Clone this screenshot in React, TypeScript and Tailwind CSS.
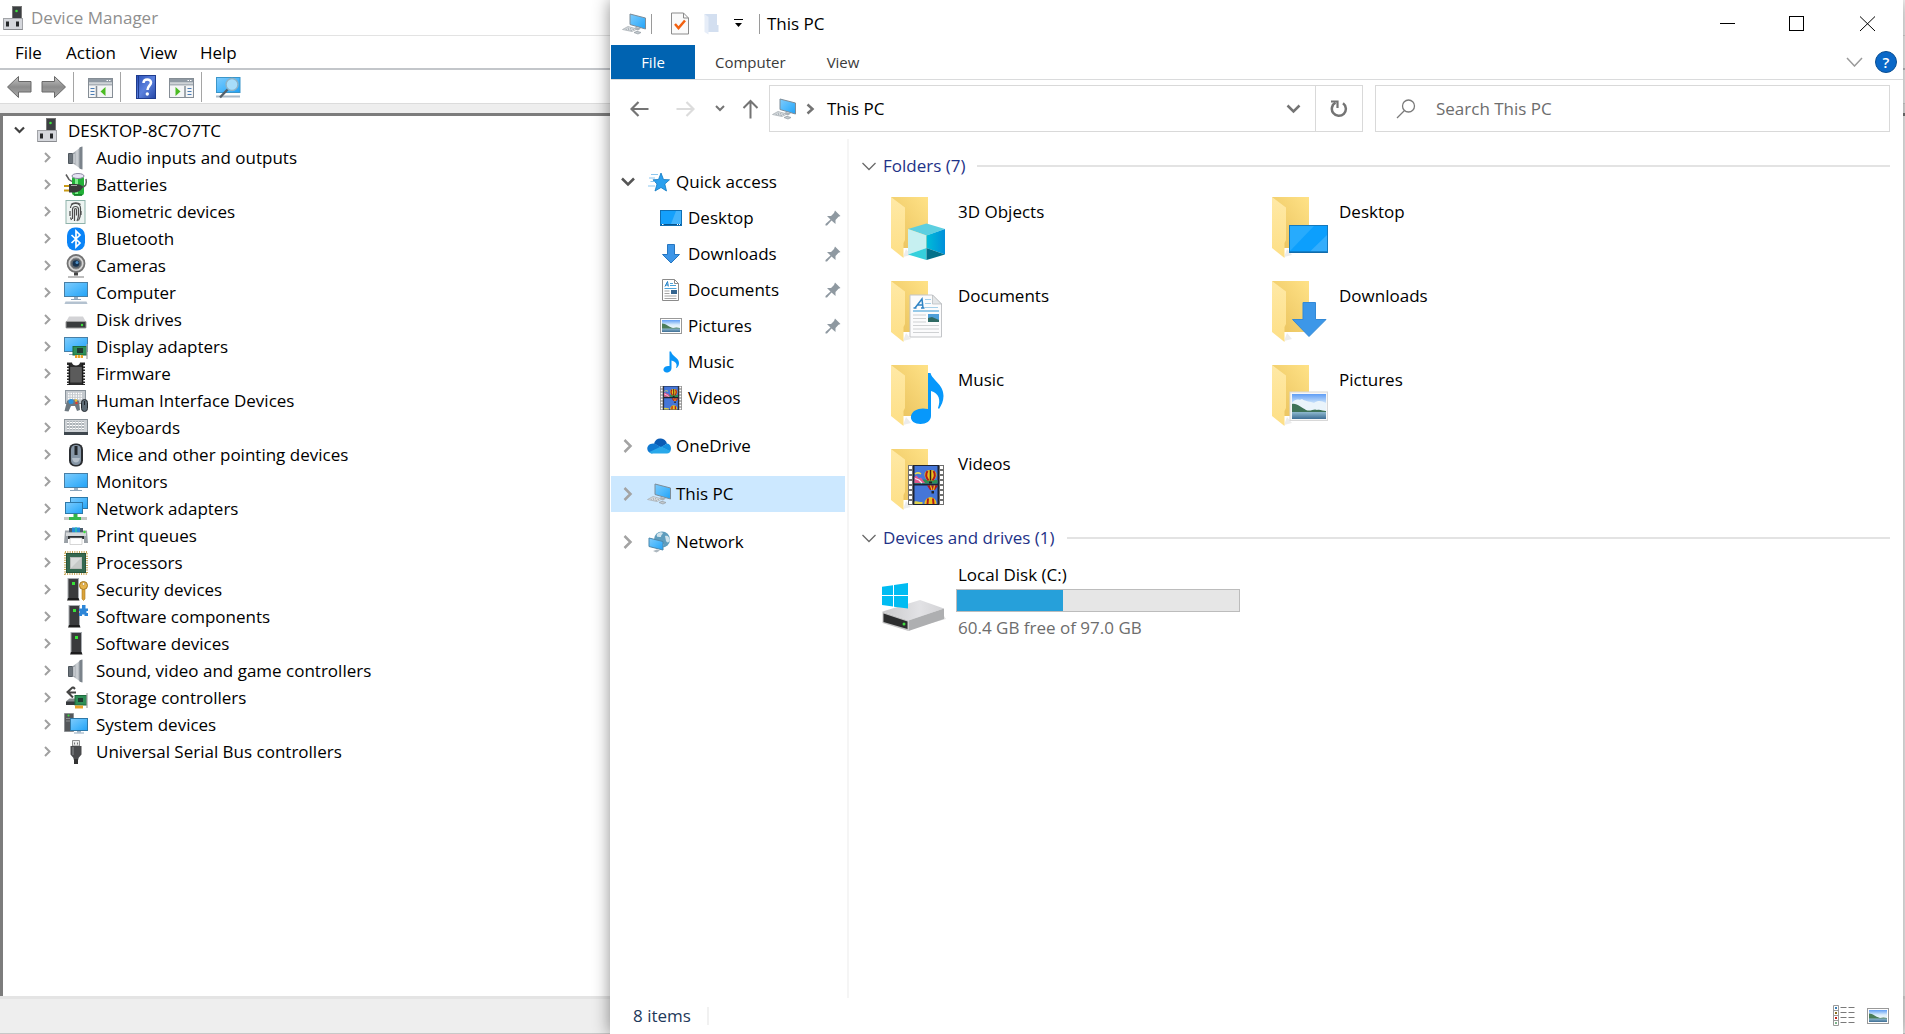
import type { ReactNode } from "react";

interface IconProps {
  children: ReactNode;
  w?: number;
  h?: number;
  box?: string;
}

const Svg = ({ children, w = 24, h = 24, box }: IconProps) => (
  <svg
    width={w}
    height={h}
    viewBox={box ?? `0 0 ${w} ${h}`}
    fill="none"
    aria-hidden="true"
    className="shrink-0"
  >
    {children}
  </svg>
);

const Gradients = () => (
  <svg className="absolute h-0 w-0" aria-hidden="true">
    <defs>
      <linearGradient id="screen" x1="0" y1="0" x2="1" y2="1">
        <stop offset="0" stopColor="#7fcbfb" />
        <stop offset="0.5" stopColor="#4fb9fc" />
        <stop offset="1" stopColor="#22a2f6" />
      </linearGradient>
      <linearGradient id="metal" x1="0" y1="0" x2="1" y2="0">
        <stop offset="0" stopColor="#7d848b" />
        <stop offset="0.5" stopColor="#d2d6da" />
        <stop offset="1" stopColor="#868d94" />
      </linearGradient>
      <linearGradient id="grayArrow" x1="0" y1="0" x2="0" y2="1">
        <stop offset="0" stopColor="#c4c4c4" />
        <stop offset="0.5" stopColor="#8c8c8c" />
        <stop offset="1" stopColor="#a9a9a9" />
      </linearGradient>
      <linearGradient id="folderBack" x1="1" y1="0" x2="0" y2="1">
        <stop offset="0" stopColor="#ffe287" />
        <stop offset="1" stopColor="#e8c05a" />
      </linearGradient>
      <linearGradient id="folderFlap" x1="0" y1="0" x2="0" y2="1">
        <stop offset="0" stopColor="#ffe9a6" />
        <stop offset="1" stopColor="#fddf86" />
      </linearGradient>
      <linearGradient id="sky" x1="0" y1="0" x2="0" y2="1">
        <stop offset="0" stopColor="#5f9df5" />
        <stop offset="0.6" stopColor="#d9ecfb" />
        <stop offset="1" stopColor="#eef7fc" />
      </linearGradient>
      <linearGradient id="lake" x1="0" y1="0" x2="0" y2="1">
        <stop offset="0" stopColor="#8fb9cf" />
        <stop offset="1" stopColor="#3d6d94" />
      </linearGradient>
      <linearGradient id="cubeRight" x1="0" y1="0" x2="1" y2="0">
        <stop offset="0" stopColor="#00bcd8" />
        <stop offset="1" stopColor="#008fda" />
      </linearGradient>
      <linearGradient id="helpBlue" x1="0" y1="0" x2="1" y2="1">
        <stop offset="0" stopColor="#2a50b8" />
        <stop offset="0.5" stopColor="#5c82de" />
        <stop offset="1" stopColor="#2546a4" />
      </linearGradient>
      <linearGradient id="driveTop" x1="0" y1="0" x2="1" y2="0">
        <stop offset="0" stopColor="#c9c9cb" />
        <stop offset="0.6" stopColor="#e2e2e5" />
        <stop offset="1" stopColor="#d2d2d5" />
      </linearGradient>
    </defs>
  </svg>
);

/* ---------- Device Manager icons ---------- */

const HostIcon = () => (
  <Svg w={20} h={24}>
    <rect x="9.500" y="0.500" width="9" height="13" fill="#3c3f42" stroke="#777" />
    <circle cx="13.500" cy="5" r="1.300" fill="#3fe03f" />
    <rect x="0.500" y="12.500" width="19" height="11" fill="#d5d7dc" stroke="#a2a4a8" />
    <path d="M1 23.500h18.500" stroke="#8a8c90" />
    <rect x="3" y="15.500" width="3" height="5" fill="#26282a" />
    <rect x="13" y="15.500" width="3" height="5" fill="#26282a" />
  </Svg>
);

const SpeakerIcon = () => (
  <Svg>
    <path d="M4.500 7.500h4v10h-4z" fill="#6c747b" stroke="#4f575e" />
    <path d="M8.500 7.500L17.500 0.500v23L8.500 17z" fill="url(#metal)" />
    <path d="M15.500 1.500v21l3 1V0.500z" fill="#7b838b" />
    <path d="M10 8v9" stroke="#e3e6e9" />
  </Svg>
);

const BatteryIcon = () => (
  <Svg>
    <rect x="8" y="3" width="12" height="19.500" rx="3" fill="#22b038" />
    <path d="M11 5h3v16h-3z" fill="#7df08a" />
    <ellipse cx="14" cy="3" rx="6" ry="2.500" fill="#e5e2f2" stroke="#8a86a0" />
    <path d="M2 1.500l3 5 3 2M17 14c5 0 6-3 5-8" stroke="#5b5b5b" strokeWidth="1.500" />
    <path d="M0 13h6M0 17.500h6" stroke="#c99a16" strokeWidth="2" />
    <path d="M5 11h6c4 0 7 1 8 3-2 4-5 5-8 5.500H5z" fill="#3b3b3b" />
    <path d="M7 12.500h6" stroke="#a5a5a5" />
    <path d="M10 22h8" stroke="#117522" strokeWidth="1.500" />
  </Svg>
);

const FingerprintIcon = () => (
  <Svg>
    <rect x="2" y="0.500" width="19" height="23" fill="#eef4f2" stroke="#8fb3ab" />
    <g stroke="#4d4d4d" strokeWidth="1.200">
      <path d="M6.500 8c0-6 10-6 10 0v5c0 3-1 6-2 7.500" />
      <path d="M6 11v5M8.500 19V9.500c0-4 6-4 6 0V15c0 2-.5 3.500-1.500 6" />
      <path d="M10.500 21V10c0-2 2-2 2 0v5.500" />
      <path d="M7 4.500c2.500-2.300 7-2.300 9.500 0" />
      <path d="M17 11v4M6.500 17.500l1 2.500" />
    </g>
  </Svg>
);

const BluetoothIcon = () => (
  <Svg>
    <rect x="3" y="0.500" width="18" height="23" rx="8" fill="#0a84f7" />
    <path d="M7.500 8l8.500 8-4 4V4l4 4-8.500 8" stroke="#fff" strokeWidth="1.700" />
  </Svg>
);

const CameraIcon = () => (
  <Svg>
    <circle cx="12" cy="9.500" r="8.500" fill="#d5d5d5" stroke="#747474" strokeWidth="1.800" />
    <circle cx="12" cy="9.500" r="5.500" fill="#5f666d" stroke="#8d8d8d" />
    <circle cx="12" cy="9.500" r="3.300" fill="#16324f" />
    <circle cx="13" cy="8.500" r="1.500" fill="#4d8dc4" />
    <path d="M12 18.500v3" stroke="#444" strokeWidth="4" />
    <path d="M4 23h16" stroke="#a9a9a9" strokeWidth="1.500" />
  </Svg>
);

const MonitorIcon = () => (
  <Svg>
    <rect x="0.500" y="3.500" width="23" height="14" fill="url(#screen)" stroke="#477fa6" />
    <path d="M10 18h4v2h-4z" fill="#9db2c4" />
    <path d="M6 20.500h12" stroke="#8ea6bb" />
  </Svg>
);

const ComputerIcon = () => (
  <Svg>
    <rect x="0.500" y="1.500" width="23" height="14" fill="url(#screen)" stroke="#477fa6" />
    <path d="M10 16h4v2h-4z" fill="#9db2c4" />
    <path d="M7 18.500h10" stroke="#8ea6bb" />
    <path d="M1.500 20.500h21l1 2.500H0.500z" fill="#b4c2d0" />
  </Svg>
);

const DiskIcon = () => (
  <Svg>
    <path d="M5 8.500h14l3 5.500H2z" fill="#d3d3d6" />
    <rect x="2" y="13.500" width="20" height="6.500" rx="0.500" fill="#3a3c3e" stroke="#9b9b9b" />
    <circle cx="18" cy="17" r="1.200" fill="#3de33d" />
  </Svg>
);

const DisplayAdapterIcon = () => (
  <Svg>
    <rect x="0.500" y="2.500" width="23" height="14" fill="url(#screen)" stroke="#477fa6" />
    <path d="M5 19.500h6" stroke="#8ea6bb" />
    <rect x="9" y="11.500" width="13.500" height="8.500" fill="#2f8f57" stroke="#1d6b3c" />
    <rect x="13" y="13" width="6" height="5" fill="#1f3d33" />
    <path d="M11 20v3h8v-3z" fill="#e8a32a" />
    <path d="M13.500 20v3M16.500 20v3" stroke="#fff" strokeWidth="0.600" />
    <path d="M23 9v15" stroke="#a9a9a9" strokeWidth="1.300" />
  </Svg>
);

const FirmwareIcon = () => (
  <Svg>
    <path d="M3 0.500h5c0 4 8 4 8 0h5V23H3z" fill="#2b2b2b" />
    <path d="M6 5h12v15.500H6z" fill="#5b5b5b" />
    <path d="M3.500 3v19M20.500 3v19" stroke="#fff" strokeWidth="2.500" strokeDasharray="1.500 1.500" />
    <path d="M5.500 1v22M18.500 1v22" stroke="#1b1b1b" strokeWidth="1.300" />
  </Svg>
);

const HidIcon = () => (
  <Svg>
    <rect x="1.500" y="1.500" width="20" height="13" fill="#c4c9ce" stroke="#8b949c" />
    <path d="M4 4.500h15M4 7h15M4 9.500h15" stroke="#fff" strokeWidth="1.500" strokeDasharray="1.500 1" />
    <path d="M3 12c2-2 10-2 12 0l1 9-3 1-2-5H7l-2.500 5.500-4-.5z" fill="#6d7880" />
    <circle cx="7" cy="12.500" r="2.500" fill="#2b93dd" />
    <circle cx="12.500" cy="14" r="1.300" fill="#dd3f2f" />
    <circle cx="12" cy="11.500" r="1.300" fill="#edc22e" />
    <rect x="17.500" y="10.500" width="6" height="12" rx="3" fill="#5d6a75" stroke="#262b30" />
    <path d="M20.500 12v4" stroke="#20252a" />
  </Svg>
);

const KeyboardIcon = () => (
  <Svg>
    <rect x="0.500" y="3.500" width="23" height="14" fill="#cdd1d5" stroke="#8d959b" />
    <path d="M0 16h24v3H0z" fill="#3f474e" />
    <path d="M3 6.500h18M3 9.500h18M3 12.500h18" stroke="#8c9399" strokeWidth="2" strokeDasharray="2 1" />
    <path d="M3 6.500h18M3 9.500h18M3 12.500h18" stroke="#fff" strokeDasharray="2 1" />
  </Svg>
);

const MouseIcon = () => (
  <Svg>
    <rect x="5" y="0.500" width="14" height="23" rx="6" fill="#2a2d31" />
    <rect x="7" y="2" width="10" height="20" rx="4.500" fill="#8696a6" />
    <path d="M8 15c1 6 7 6 8 0" fill="#b4bfca" />
    <path d="M12 3v9" stroke="#23272b" strokeWidth="3" />
  </Svg>
);

const NetworkAdapterIcon = () => (
  <Svg>
    <rect x="6.500" y="0.500" width="17" height="11" fill="url(#screen)" stroke="#2d78a8" />
    <rect x="1.500" y="5.500" width="17" height="11" fill="url(#screen)" stroke="#2d78a8" />
    <path d="M9.500 17h4v3h-4z" fill="#36b24a" />
    <path d="M0 21.500h6M17 21.500h6" stroke="#c5c9c5" strokeWidth="3" />
    <path d="M5 21.500h12" stroke="#35b94b" strokeWidth="3" />
  </Svg>
);

const PrinterIcon = () => (
  <Svg>
    <path d="M5 4h14v6H5z" fill="#4d5d6b" />
    <path d="M8 3.500h8v6H8z" fill="#2489d6" />
    <path d="M11 3.500h2v6h-2z" fill="#27b8b3" />
    <path d="M1 6.500h4v2h14v-2h4l1 12.500h-4v-4H4v4H0z" fill="#9aa0a6" />
    <path d="M2 8.500h20v3.500H2z" fill="#d5d8da" />
    <path d="M4 12h16v3H4z" fill="#2c2f33" />
    <path d="M6 14h12v6.500H6z" fill="#fff" stroke="#bbb" strokeWidth="0.600" />
    <circle cx="20.500" cy="8" r="1.200" fill="#3be13b" />
  </Svg>
);

const ProcessorIcon = () => (
  <Svg>
    <rect x="1" y="1" width="22" height="22" stroke="#c4a254" strokeWidth="2" strokeDasharray="1 1.330" />
    <rect x="2.500" y="2.500" width="19" height="19" fill="#35684f" stroke="#25543c" />
    <rect x="6.500" y="6.500" width="11" height="11" fill="#d9dbda" stroke="#b7bbb8" />
    <path d="M7 17L17 7v10z" fill="#c6c9c7" />
  </Svg>
);

const Tower = ({ x }: { x: number }) => (
  <g>
    <rect x={x} y="0.500" width="10.500" height="20" fill="#3a3b3d" stroke="#a7abb0" />
    <rect x={x + 4} y="4" width="3" height="3" fill="#37e337" />
    <path d={`M${x - 1} 22.500h12.500l-1-2.500h-10.500z`} fill="#1c1c1d" />
  </g>
);

const SecurityIcon = () => (
  <Svg>
    <Tower x={4} />
    <circle cx="19.500" cy="7.500" r="4" fill="#e7b34a" stroke="#a87b22" />
    <circle cx="19.500" cy="6" r="1.300" fill="#fff" stroke="#a87b22" strokeWidth="0.500" />
    <path d="M18 11.500h3V21l-1.500 1.500L18 21z" fill="#dba33a" stroke="#a87b22" strokeWidth="0.600" />
  </Svg>
);

const SoftwareComponentIcon = () => (
  <Svg>
    <Tower x={5} />
    <path d="M15 3.500h3V0h3.500v3.500H24v2.500h-1.500v2H24v3h-3.500V9.500H18V11h-3V8h1V6h-1z" fill="#2d86d8" />
  </Svg>
);

const SoftwareDeviceIcon = () => (
  <Svg>
    <Tower x={7} />
  </Svg>
);

const StorageIcon = () => (
  <Svg>
    <path d="M9 1L3.500 6 9 11.500M9 1l2 2M5 6.500h7" stroke="#444" strokeWidth="2" />
    <path d="M2.500 15l3-2.500h10v6h-13z" fill="#85898d" />
    <path d="M2 15.500h10v3.500H2z" fill="#36393c" />
    <rect x="11" y="9.500" width="11.500" height="9.500" fill="#2f8f57" stroke="#1d6b3c" />
    <rect x="14" y="12" width="5" height="4" fill="#1f3d33" />
    <path d="M11 19.500h8v3h-8z" fill="#e8a32a" />
    <path d="M23 7v15" stroke="#a9a9a9" strokeWidth="1.300" />
  </Svg>
);

const SystemIcon = () => (
  <Svg>
    <path d="M0.500 0.500h9v18h-9z" fill="#55585b" stroke="#8d9194" />
    <path d="M2 5.500h6M2 8h6" stroke="#8a8d90" />
    <circle cx="4.500" cy="2.500" r="1" fill="#37e337" />
    <rect x="6.500" y="5.500" width="17" height="12" fill="url(#screen)" stroke="#2d78a8" />
    <path d="M13 18h4v1.500h-4z" fill="#9db2c4" />
    <path d="M10 20h10" stroke="#8ea6bb" />
  </Svg>
);

const UsbIcon = () => (
  <Svg>
    <path d="M8.500 0.500h7V6h-7z" fill="#ebebeb" stroke="#8f8f8f" />
    <path d="M10.500 2.500v2M13.500 2.500v2" stroke="#777" />
    <path d="M6.500 6h11v8.500L14.500 18v1.500h-5V18l-3-3.500z" fill="#4a4b4d" />
    <path d="M9 7v8" stroke="#77797b" strokeWidth="1.500" />
    <path d="M12 19v5" stroke="#333" strokeWidth="4" />
  </Svg>
);

const ToolArrowIcon = ({ flip = false }: { flip?: boolean }) => (
  <Svg w={25} h={24}>
    <path
      d={
        flip
          ? "M24.500 12L13.500 1.500v5H1v10.500h12.500v5.500z"
          : "M0.500 12L11.500 1.500v5H24v10.500H11.500v5.500z"
      }
      fill="url(#grayArrow)"
      stroke="#686868"
    />
  </Svg>
);

const PaneIcon = ({ flip = false }: { flip?: boolean }) => (
  <Svg w={25} h={24}>
    <rect x="0.500" y="3.500" width="24" height="19" fill="#f4f5f6" stroke="#858d95" />
    <path d="M1 4h23v3.500H1z" fill="#8f99a3" />
    <path d="M18.500 5.500h4.500" stroke="#fff" strokeDasharray="1.500 1" />
    <path d="M1 9.500h23" stroke="#aab1b8" strokeWidth="2" />
    {flip ? (
      <>
        <path d="M16 11v11.500" stroke="#858d95" strokeWidth="1.500" />
        <path d="M18.500 13.500h4M18.500 16.500h4M18.500 19.500h4" stroke="#4b7cb4" />
        <path d="M6.500 12v9l5-4.500z" fill="#4bbb22" />
      </>
    ) : (
      <>
        <path d="M8.500 11v11.500" stroke="#858d95" strokeWidth="1.500" />
        <path d="M2.500 13.500h4M2.500 16.500h4M2.500 19.500h4" stroke="#4b7cb4" />
        <path d="M17.500 12v9l-5-4.500z" fill="#4bbb22" />
      </>
    )}
  </Svg>
);

const HelpBookIcon = () => (
  <Svg w={20} h={24}>
    <rect x="0.500" y="0.500" width="19" height="23" fill="url(#helpBlue)" stroke="#1f3c8f" />
    <path d="M2.500 1v22" stroke="#1f3c8f" />
    <path d="M7.500 8c0-5 7.500-4.500 7.500-.5 0 3-3.500 3.500-3.500 7.500" stroke="#fff" strokeWidth="2.500" />
    <circle cx="11.300" cy="19" r="1.700" fill="#fff" />
  </Svg>
);

const ScanIcon = () => (
  <Svg w={25} h={24}>
    <rect x="0.500" y="2.500" width="23.500" height="15" fill="url(#screen)" stroke="#3c96c9" />
    <path d="M0 21.500h24" stroke="#a9b9c7" strokeWidth="2" />
    <circle cx="16" cy="9.500" r="6" fill="#a8ddfa" stroke="#8cb2c7" strokeWidth="1.500" />
    <path d="M11.500 14.500L4 22.500" stroke="#566069" strokeWidth="2.500" />
  </Svg>
);

/* ---------- Explorer icons ---------- */

const PcIcon = () => (
  <Svg w={24} h={22}>
    <path d="M8 1l15.500 4v11L8 11.500z" fill="url(#screen)" stroke="#7c8c98" />
    <path d="M14 14l-3 2 5 1.500 3-2z" fill="#a8b0b6" />
    <path d="M6 13.500l9 2.500-5 2.500-9.500-2z" fill="#dfe3e6" stroke="#a9b0b5" strokeWidth="0.800" />
    <path d="M3.500 16l7 1.700M5.500 15l7 1.700" stroke="#a0a8ae" strokeDasharray="1.500 1" />
    <path d="M12 19.500l3-1.200 4 1.200-3 1.500z" fill="#c2c9ce" stroke="#9aa2a8" strokeWidth="0.800" />
  </Svg>
);

const PropertiesIcon = () => (
  <Svg w={18} h={23}>
    <path d="M0.500 1h12l5 5v16H0.500z" fill="#fafafa" stroke="#8b8b8b" />
    <path d="M12.500 1v5h5" stroke="#8b8b8b" />
    <path d="M4 12l3.500 4 6.500-7.500" stroke="#f2600f" strokeWidth="2.500" />
  </Svg>
);

const NewFolderIcon = () => (
  <Svg w={15} h={22}>
    <path d="M0.500 1H13v11h1.500v7H3z" fill="#d3dff0" />
    <path d="M0.500 1L4.500 4v17.500L0.500 19z" fill="#e6edf8" />
  </Svg>
);

const StarIcon = () => (
  <Svg w={22} h={20}>
    <path d="M13 1l2.500 6.500 6 .3-4.700 4.200 1.700 7-5.500-3.500L7 19l2-7-4-4.200 5.500-.3z" fill="#2ba0ee" stroke="#0f78c2" strokeWidth="0.800" />
    <path d="M3 2.500h7M1 6h6M2.500 9.500h4M0 14h7" stroke="#8cc7f0" />
  </Svg>
);

const DesktopIcon = () => (
  <Svg w={22} h={16}>
    <rect x="0.500" y="0.500" width="21" height="15" fill="#14a0fc" stroke="#0f6fb4" />
    <path d="M11 14L16 1h5v13z" fill="#43b3fc" />
    <path d="M1 14.500h20" stroke="#06548e" />
    <path d="M2 14.500h1.500M17 14.500h1M19 14.500h1" stroke="#fff" />
  </Svg>
);

const DownArrowIcon = () => (
  <Svg w={22} h={20}>
    <path d="M7.500 0.500h7v10h5L11 19l-8.500-8.500h5z" fill="#3d96e8" stroke="#2676c0" />
  </Svg>
);

const DocumentIcon = () => (
  <Svg w={22} h={22}>
    <path d="M2.500 0.500h12l4 4v17h-16z" fill="#fff" stroke="#8b8b8b" />
    <path d="M14.500 0.500v4h4" stroke="#8b8b8b" />
    <path d="M5 7.500l2.500-5 .8 5M5.800 6h2.500" stroke="#1e7fc6" />
    <path d="M10 4.500h3M10 6.500h6M4.500 9.500h12" stroke="#4ba3da" />
    <path d="M4.500 12h5M4.500 14.500h5M4.500 17h12M4.500 19.500h12" stroke="#a5a5a5" />
    <path d="M11 11h6v4h-6z" fill="#33648f" />
  </Svg>
);

const PictureIcon = () => (
  <Svg w={22} h={16}>
    <rect x="0.500" y="0.500" width="21" height="15" fill="#fff" stroke="#999" />
    <path d="M2 2h18v8H2z" fill="url(#sky)" />
    <path d="M2 5.500c4 0 6 3 11 4.500 3-1 5-.5 7 0v1H2z" fill="#4b7d59" />
    <path d="M2 10.500h18V14H2z" fill="url(#lake)" />
  </Svg>
);

const MusicIcon = () => (
  <Svg w={22} h={22}>
    <path d="M9.500 0.500h1.500c.8 4.500 8 6 8 11.500 0 2-.8 3.500-2.200 5-.5 0-.8-.5-.5-1 1.200-3-.8-5.500-4.800-6.500V17c0 3-2.500 4.500-4.500 4.500S3 20 3.500 18c.5-2.500 3.500-3.500 6-3z" fill="#0a95f7" />
  </Svg>
);

const Film = () => (
  <g>
    <path d="M0 0h36v40H0z" fill="#6f6f6f" />
    <path d="M2.500 1v38M33.500 1v38" stroke="#fff" strokeWidth="3" strokeDasharray="3 2" />
    <path d="M5 0h26v40H5z" fill="#1d2333" />
    <path d="M6.500 1h23v17.500h-23zM6.500 20.500h23V39h-23z" fill="#4576d8" />
    <path d="M6.500 16l9-1.500 14 .5v3.500h-23z" fill="#2e8f55" />
    <path d="M6.500 12l2-1.500 2.500 3 2-1 4 5.500H6.500z" fill="#e2578c" />
    <path d="M7 13.500l4 1.500 3 3" stroke="#f4e9f2" strokeWidth="1.200" />
    <path d="M7 9c2-1.500 4-1.500 6 0" stroke="#e8dc50" strokeWidth="1.500" />
    <path d="M22.500 5c8 0 7 7 3 10.500h-6C15.500 12 14.500 5 22.500 5z" fill="#e9c21f" />
    <path d="M19.500 6c-2 3-1 7 1 9.500M25.500 6c2 3 1 7-1 9.500" stroke="#b3191c" strokeWidth="2" />
    <path d="M22.500 5v10.500" stroke="#3a1a12" strokeWidth="1.500" />
    <path d="M21 16.500h3v2h-3z" fill="#222" />
    <path d="M19 20.500h11l-3 4.500h-5z" fill="#b3191c" />
    <path d="M22.500 20.500l1.500 4.500M26.500 20.500L25.500 25" stroke="#e9c21f" strokeWidth="1.200" />
    <path d="M23.500 26h2.500v2.500h-2.500z" fill="#222" />
    <path d="M16.500 39c0-9 12-9 12 0z" fill="#e9c21f" />
    <path d="M20 33.500l-.5 5.500M25 33.500l.5 5.500" stroke="#b3191c" strokeWidth="2" />
    <path d="M6.500 36.500c3-1 5 1 8 .5v2h-8z" fill="#dfd24c" />
  </g>
);

const VideoIcon = () => (
  <Svg w={22} h={24} box="0 0 36 40">
    <Film />
  </Svg>
);

const OneDriveIcon = () => (
  <Svg w={24} h={16}>
    <path d="M7 5.500C8 2 11 0 14 0.500c3 .3 5 2 6 5l-6 4z" fill="#0a5cb5" />
    <path d="M5 15.500C-.5 15-1.500 8 3.500 6c2-.8 4-.8 6 .5L15 10z" fill="#1079d1" />
    <path d="M14 9l6-3.500c4 .5 5 5.500 3 8z" fill="#1490df" />
    <path d="M5 15.500h15c2 0 3-1 3.500-2.500L14 8.500 2.500 14c.5 1 1.500 1.500 2.500 1.500z" fill="#28a8ea" />
  </Svg>
);

const NetworkIcon = () => (
  <Svg w={23} h={22}>
    <circle cx="14" cy="8.500" r="8" fill="#5f9dbd" />
    <path d="M9 3c3-2.500 5-2 6-1-1 2-2 2-2 4-3 0-5 0-4-3zM17 5c3-1 4 1 5 4-1 3-3 3-4 1zM13 12c3 0 3 2 2 4" fill="#cfe3ec" />
    <path d="M1 7l14 3.500V19L1 15.500z" fill="url(#screen)" stroke="#4d87aa" />
    <path d="M5 20l4-1.500 3 1-3.500 2z" fill="#aeb8bf" />
  </Svg>
);

const PinIcon = () => (
  <Svg w={16} h={16}>
    <path d="M10 0.500L15.500 6l-2 .8-3 3.200v4L6.500 10.500 2 15.500H0.500V14L5.500 9.500 2 6h4L9 3z" fill="#8f99a1" />
  </Svg>
);

const DriveIcon = () => (
  <Svg w={64} h={50}>
    <path d="M28 46l36-10-2-3z" fill="#e3e3e3" />
    <path d="M0.500 28.500L38 17l24 8.500-35.500 12z" fill="url(#driveTop)" />
    <path d="M26.500 37.500l35.500-12V36L26.500 48z" fill="#aeafb1" />
    <path d="M0.500 28.500l26 9V48l-26-8z" fill="#c3c3c4" />
    <path d="M1.500 30.500l24 8V46l-24-7z" fill="#2c2d2e" />
    <circle cx="22" cy="41" r="1.500" fill="#3fdc3f" />
    <path d="M0 3.700l11-1.500V12H0zM12 2l14-2v12H12zM0 13h11v10.500L0 22zM12 13h14v12.500l-14-1.800z" fill="#00bcf2" />
  </Svg>
);

const FolderIcon = ({ children }: { children: ReactNode }) => (
  <Svg w={58} h={64}>
    <path d="M12 60l8-2-5-6z" fill="#ececec" />
    <path d="M0 0h37v51H10z" fill="url(#folderBack)" />
    <path d="M0 0l14 10.500V43L12.500 46v15L0 51z" fill="url(#folderFlap)" />
    {children}
  </Svg>
);

const Cube = () => (
  <g>
    <path d="M35.500 26.500L54 32l-18.500 6.500L17 32z" fill="#5ccfe0" />
    <path d="M17 32l18.500 6.500V51L17 57.500z" fill="#c6f0f1" />
    <path d="M35.500 38.500L54 32v25.500L35.500 51z" fill="url(#cubeRight)" />
    <path d="M17 57.500L35.500 51v12z" fill="#35d0dc" />
    <path d="M35.500 51L54 57.500 35.500 63z" fill="#04718a" />
  </g>
);

const Sheet = () => (
  <g>
    <path d="M19 14h22.500l9 9v33H19z" fill="#fbfbfc" stroke="#c3c5c8" />
    <path d="M41.500 14v9h9z" fill="#e4e6e8" stroke="#b5b7ba" strokeWidth="0.700" />
    <path d="M24 27l7-9 1 9M26 24h6M22.500 27h3M30 27h3.500" stroke="#2f83c4" strokeWidth="1.500" />
    <path d="M34 18.500h6M34 22.500h6M34 26.500h13" stroke="#a5cfe8" />
    <path d="M22 30h26" stroke="#74b9e2" strokeWidth="1.500" />
    <path d="M22 34h13M22 37.500h13M22 41h13M22 44.500h26M22 48h26M22 51.500h26" stroke="#cfd1d3" />
    <path d="M37 33h11v8H37z" fill="#4f9fd8" />
    <path d="M37 37l4-1 7 3v2H37z" fill="#2f6a63" />
  </g>
);

const Note = () => (
  <path
    d="M37 8h2.500c1.500 7 13 11 13 23 0 5-2 9-4.500 13l-1-1c3-8 1-15-7-17v25c0 5-5 8-10.500 8S19 56 20 51c1-6 9-9 17-7z"
    fill="#0798fb"
  />
);

const DesktopPane = () => (
  <g>
    <rect x="17.500" y="28.500" width="38" height="27" fill="#0c9ffd" stroke="#1579bd" />
    <path d="M18 54l24-25H18z" fill="#27abfd" />
    <path d="M38 54.500h17V38z" fill="#34adfc" />
    <path d="M18 55h37" stroke="#0e5f9a" />
  </g>
);

const BigArrow = () => (
  <path d="M31 21.500h12.500V38.500H54L37 55.500 20.500 38.500H31z" fill="#3c97e8" stroke="#3389d6" />
);

const Photo = () => (
  <g>
    <rect x="18" y="27" width="37.500" height="28.500" fill="#f7f7f7" stroke="#d8d8d8" />
    <path d="M20 29h34v17H20z" fill="url(#sky)" />
    <path d="M20 38c4-6 7-2 10-4 4 3 8 2 12 4 4-3 8-2 12 0v6H20z" fill="#eaf4fb" />
    <path d="M20 39c5-1 10 4 14 6 5 2 8-2 11 0 3-1 6 1 9 1v2H20z" fill="#3f7358" />
    <path d="M20 47h34v7H20z" fill="url(#lake)" />
  </g>
);

/* ---------- data ---------- */

const categories: { name: string; icon: ReactNode }[] = [
  { name: "Audio inputs and outputs", icon: <SpeakerIcon /> },
  { name: "Batteries", icon: <BatteryIcon /> },
  { name: "Biometric devices", icon: <FingerprintIcon /> },
  { name: "Bluetooth", icon: <BluetoothIcon /> },
  { name: "Cameras", icon: <CameraIcon /> },
  { name: "Computer", icon: <ComputerIcon /> },
  { name: "Disk drives", icon: <DiskIcon /> },
  { name: "Display adapters", icon: <DisplayAdapterIcon /> },
  { name: "Firmware", icon: <FirmwareIcon /> },
  { name: "Human Interface Devices", icon: <HidIcon /> },
  { name: "Keyboards", icon: <KeyboardIcon /> },
  { name: "Mice and other pointing devices", icon: <MouseIcon /> },
  { name: "Monitors", icon: <MonitorIcon /> },
  { name: "Network adapters", icon: <NetworkAdapterIcon /> },
  { name: "Print queues", icon: <PrinterIcon /> },
  { name: "Processors", icon: <ProcessorIcon /> },
  { name: "Security devices", icon: <SecurityIcon /> },
  { name: "Software components", icon: <SoftwareComponentIcon /> },
  { name: "Software devices", icon: <SoftwareDeviceIcon /> },
  { name: "Sound, video and game controllers", icon: <SpeakerIcon /> },
  { name: "Storage controllers", icon: <StorageIcon /> },
  { name: "System devices", icon: <SystemIcon /> },
  { name: "Universal Serial Bus controllers", icon: <UsbIcon /> },
];

const quickLinks: { name: string; icon: ReactNode; pinned: boolean }[] = [
  { name: "Desktop", icon: <DesktopIcon />, pinned: true },
  { name: "Downloads", icon: <DownArrowIcon />, pinned: true },
  { name: "Documents", icon: <DocumentIcon />, pinned: true },
  { name: "Pictures", icon: <PictureIcon />, pinned: true },
  { name: "Music", icon: <MusicIcon />, pinned: false },
  { name: "Videos", icon: <VideoIcon />, pinned: false },
];

const folders: { name: string; art: ReactNode }[] = [
  { name: "3D Objects", art: <Cube /> },
  { name: "Desktop", art: <DesktopPane /> },
  { name: "Documents", art: <Sheet /> },
  { name: "Downloads", art: <BigArrow /> },
  { name: "Music", art: <Note /> },
  { name: "Pictures", art: <Photo /> },
  {
    name: "Videos",
    art: (
      <g transform="translate(17 16)">
        <Film />
      </g>
    ),
  },
];

const disk = { name: "Local Disk (C:)", free: 60.4, total: 97 };

/* ---------- Device Manager ---------- */

const Separator = () => <span className="h-[30px] w-px bg-[#a5a5a5]" />;

const DeviceManager = () => (
  <section
    aria-label="Device Manager"
    className="flex min-h-screen flex-col bg-white text-[17px] leading-[27px] text-black"
  >
    <header className="flex h-9 items-center gap-2 border-b border-[#e3e3e3] pl-[3px]">
      <HostIcon />
      <h1 className="text-[#8f8f8f]">Device Manager</h1>
    </header>
    <nav className="flex h-[34px] items-center border-b-2 border-[#c3c6ca] pl-[15px]">
      <button className="w-[51px] text-left">File</button>
      <button className="w-[74px] text-left">Action</button>
      <button className="w-[60px] text-left">View</button>
      <button className="text-left">Help</button>
    </nav>
    <div className="flex h-[34px] items-center border-b border-[#dcdcdc] pl-[7px] pt-px">
      <div className="flex w-[66px] gap-[9px]">
        <button aria-label="Back">
          <ToolArrowIcon />
        </button>
        <button aria-label="Forward">
          <ToolArrowIcon flip />
        </button>
      </div>
      <Separator />
      <button aria-label="Show console tree" className="ml-[14px] mr-[7px]">
        <PaneIcon />
      </button>
      <Separator />
      <button aria-label="Help" className="ml-[15px]">
        <HelpBookIcon />
      </button>
      <button aria-label="Show action pane" className="ml-[13px] mr-[7px]">
        <PaneIcon flip />
      </button>
      <Separator />
      <button aria-label="Scan for hardware changes" className="ml-[14px]">
        <ScanIcon />
      </button>
    </div>
    <div className="h-[9px] bg-[#eeeeee]" />
    <div className="flex-1 border-l-[3px] border-t-[3px] border-[#7c7c7c]">
      <button className="flex h-7 items-center pl-[11px]">
        <Svg w={11} h={8}>
          <path d="M1 1.500l4.500 4.500L10 1.500" stroke="#404040" strokeWidth="2.200" />
        </Svg>
        <span className="ml-[12px] mr-[11px]">
          <HostIcon />
        </span>
        DESKTOP-8C7O7TC
      </button>
      <ul>
        {categories.map(({ name, icon }) => (
          <li key={name}>
            <button className="flex h-[27px] items-center pl-[41px]">
              <Svg w={7} h={11}>
                <path d="M1 1l4.500 4.500L1 10" stroke="#a0a0a0" strokeWidth="2" />
              </Svg>
              <span className="ml-[13px] mr-2">{icon}</span>
              {name}
            </button>
          </li>
        ))}
      </ul>
    </div>
    <footer className="h-[38px] border-b border-t-[3px] border-b-[#c8c8c8] border-t-[#e4e4e4] bg-[#eeeeee]" />
  </section>
);

/* ---------- File Explorer ---------- */

const Expander = ({ open = false }: { open?: boolean }) => (
  <span className="flex w-[15px] shrink-0 justify-center">
    {open ? (
      <Svg w={14} h={10}>
        <path d="M1 1.500l6 6 6-6" stroke="#555" strokeWidth="2.500" />
      </Svg>
    ) : (
      <Svg w={10} h={14}>
        <path d="M1.500 1l6 6-6 6" stroke="#a3a3a3" strokeWidth="2.500" />
      </Svg>
    )}
  </span>
);

interface NavItemProps {
  name: string;
  icon: ReactNode;
  open?: boolean;
  selected?: boolean;
}

const NavItem = ({ name, icon, open, selected }: NavItemProps) => (
  <button
    aria-current={selected}
    className={`flex h-9 w-[234px] items-center pl-[9px] ${selected ? "bg-[#cce8ff]" : ""}`}
  >
    <Expander open={open} />
    <span className="ml-3 mr-[5px] flex w-6 justify-center">{icon}</span>
    {name}
  </button>
);

const GroupHeader = ({ title }: { title: string }) => (
  <h2 className="flex h-8 items-center text-[#1e3287]">
    <button className="flex items-center gap-[7px]">
      <Svg w={14} h={9}>
        <path d="M0.500 1L7 7.500 13.500 1" stroke="#6a6a6a" strokeWidth="1.300" />
      </Svg>
      {title}
    </button>
    <span className="ml-3 h-[2px] flex-1 bg-[#e3e3e3]" />
  </h2>
);

const Explorer = () => {
  const used = ((disk.total - disk.free) / disk.total) * 100;

  return (
    <section
      aria-label="This PC"
      className="absolute inset-y-0 left-[610px] right-[2px] flex flex-col bg-white pl-px text-[17px] leading-6 text-black shadow-[0_0_16px_rgba(0,0,0,0.45)]"
    >
      {/* Title bar */}
      <header className="flex h-[45px] shrink-0 items-center pl-[11px] pt-[2px]">
        <PcIcon />
        <span className="ml-[5px] mr-[19px] h-5 w-px bg-[#9a9a9a]" />
        <button aria-label="Properties">
          <PropertiesIcon />
        </button>
        <button aria-label="New folder" className="ml-[15px] mr-[14px]">
          <NewFolderIcon />
        </button>
        <button aria-label="Customize Quick Access Toolbar">
          <Svg w={11} h={9}>
            <path d="M1 0.500h9" stroke="#000" />
            <path d="M2 4h7L5.500 8z" fill="#000" />
          </Svg>
        </button>
        <span className="ml-[15px] mr-[7px] h-5 w-px bg-[#9a9a9a]" />
        <h1>This PC</h1>
        <div className="ml-auto mr-[27px] flex items-center gap-[53px]">
          <button aria-label="Minimize">
            <Svg w={17} h={16}>
              <path d="M1 7.500h15" stroke="#000" />
            </Svg>
          </button>
          <button aria-label="Maximize">
            <Svg w={17} h={16}>
              <rect x="0.500" y="0.500" width="14" height="14" stroke="#000" />
            </Svg>
          </button>
          <button aria-label="Close">
            <Svg w={17} h={16}>
              <path d="M1 0.500l15 14.500M16 0.500L1 15" stroke="#000" />
            </Svg>
          </button>
        </div>
      </header>

      {/* Ribbon tabs */}
      <nav className="flex h-[35px] shrink-0 items-center border-b border-[#dadbdc] text-[15px] text-[#3b3b3b]">
        <button className="h-full w-[84px] bg-[#0063b1] text-white">File</button>
        <button className="ml-5 mr-[41px]">Computer</button>
        <button>View</button>
        <button aria-label="Expand the Ribbon" className="ml-auto mr-3">
          <Svg w={17} h={10}>
            <path d="M1 1l7.500 8L16 1" stroke="#9a9a9a" strokeWidth="1.500" />
          </Svg>
        </button>
        <button
          aria-label="Help"
          className="mr-[6px] flex h-[22px] w-[22px] items-center justify-center rounded-full border border-[#0a4e92] bg-[#0a68c8] font-semibold text-white"
        >
          ?
        </button>
      </nav>

      {/* Address row */}
      <div className="flex h-[59px] shrink-0 items-center pb-[2px] pl-[19px] pr-[13px]">
        <button aria-label="Back">
          <Svg w={19} h={16}>
            <path d="M18.500 8H2M8.500 1L1.500 8l7 7" stroke="#747474" strokeWidth="2.200" />
          </Svg>
        </button>
        <button aria-label="Forward" className="ml-[27px]">
          <Svg w={19} h={16}>
            <path d="M0.500 8H17M10.500 1l7 7-7 7" stroke="#dcdcdc" strokeWidth="2.200" />
          </Svg>
        </button>
        <button aria-label="Recent locations" className="ml-5 mr-[17px]">
          <Svg w={10} h={7}>
            <path d="M1 1l4 4 4-4" stroke="#747474" strokeWidth="2" />
          </Svg>
        </button>
        <button aria-label="Up">
          <Svg w={17} h={20}>
            <path d="M8.500 19.500V2M1.500 9l7-7 7 7" stroke="#747474" strokeWidth="2" />
          </Svg>
        </button>
        <div className="ml-[10px] flex h-[47px] flex-[590] items-center border border-[#d9d9d9] pl-[2px]">
          <PcIcon />
          <span className="ml-[10px] mr-3">
            <Svg w={9} h={12}>
              <path d="M1.500 1.500L6.500 6l-5 4.500" stroke="#747474" strokeWidth="2.500" />
            </Svg>
          </span>
          <button>This PC</button>
          <button aria-label="Previous locations" className="ml-auto mr-[14px]">
            <Svg w={15} h={10}>
              <path d="M1.500 1.500l6 6 6-6" stroke="#747474" strokeWidth="2.500" />
            </Svg>
          </button>
          <button
            aria-label="Refresh"
            className="flex h-full w-[47px] items-center justify-center border-l border-[#d9d9d9]"
          >
            <Svg w={18} h={18}>
              <path d="M13 3.200a7 7 0 1 1-7.500-.5" stroke="#747474" strokeWidth="2.500" />
              <path d="M1 1.500h6.500V8" stroke="#747474" strokeWidth="2.200" />
            </Svg>
          </button>
        </div>
        <label className="ml-3 flex h-[47px] flex-[493] items-center gap-5 border border-[#d9d9d9] pl-5">
          <Svg w={20} h={20}>
            <circle cx="12.500" cy="7" r="6" stroke="#7a7a7a" strokeWidth="1.300" />
            <path d="M8.500 11.500L1 19" stroke="#7a7a7a" strokeWidth="1.300" />
          </Svg>
          <input
            type="search"
            aria-label="Search This PC"
            placeholder="Search This PC"
            className="w-full bg-transparent outline-none placeholder:text-[#6d6d6d]"
          />
        </label>
      </div>

      <div className="flex flex-1">
        {/* Navigation pane */}
        <aside className="flex w-[238px] shrink-0 flex-col gap-3 border-r-2 border-[#f5f5f5] pt-[25px]">
          <div>
            <NavItem name="Quick access" icon={<StarIcon />} open />
            <ul>
              {quickLinks.map(({ name, icon, pinned }) => (
                <li key={name}>
                  <button className="flex h-9 w-[234px] items-center pl-[49px] pr-1">
                    {icon}
                    <span className="ml-[6px] mr-auto">{name}</span>
                    {pinned && <PinIcon />}
                  </button>
                </li>
              ))}
            </ul>
          </div>
          <NavItem name="OneDrive" icon={<OneDriveIcon />} />
          <NavItem name="This PC" icon={<PcIcon />} selected />
          <NavItem name="Network" icon={<NetworkIcon />} />
        </aside>

        <main className="flex-1 px-[13px] pt-[11px]">
          <GroupHeader title="Folders (7)" />
          <ul className="grid grid-cols-[repeat(auto-fill,381px)] gap-y-5 pb-[9px] pl-[29px] pr-[140px] pt-[15px]">
            {folders.map(({ name, art }) => (
              <li key={name}>
                <button className="flex items-start gap-[9px] text-left">
                  <FolderIcon>{art}</FolderIcon>
                  <span className="pt-[3px]">{name}</span>
                </button>
              </li>
            ))}
          </ul>
          <GroupHeader title="Devices and drives (1)" />
          <div className="flex gap-[10px] pl-5 pt-[9px]">
            <span className="pt-5">
              <DriveIcon />
            </span>
            <div className="w-[284px]">
              <p className="pl-[2px]">{disk.name}</p>
              <div
                role="meter"
                aria-label="Used space"
                aria-valuenow={used}
                className="my-[2px] h-[23px] border border-[#bcbcbc] bg-[#e6e6e6]"
              >
                <div className="h-full bg-[#26a0da]" style={{ width: `${used}%` }} />
              </div>
              <p className="pl-[2px] pt-[2px] text-[#6d6d6d]">
                {disk.free} GB free of {disk.total.toFixed(1)} GB
              </p>
            </div>
          </div>
        </main>
      </div>

      {/* Status bar */}
      <footer className="flex h-9 shrink-0 items-center pl-[22px] pr-[14px] text-[#1e395b]">
        <span>8 items</span>
        <span className="ml-4 h-[18px] w-[2px] bg-[#f1f1f1]" />
        <button aria-label="Details view" className="ml-auto">
          <Svg w={22} h={22}>
            <path d="M0.500 0.500h5v20h-5zM0.500 5.500h5M0.500 10.500h5M0.500 15.500h5" stroke="#999" />
            <path d="M2 2h2v2H2z" fill="#3c7fb5" />
            <path d="M2 7h2v2H2z" fill="#8c7220" />
            <path d="M2 12h2v2H2z" fill="#c02418" />
            <path d="M2 17h2v2H2z" fill="#7cb58a" />
            <path d="M7.500 2.500h6M15.500 2.500h6M7.500 7.500h6M15.500 7.500h6M7.500 12.500h6M15.500 12.500h6M7.500 17.500h6M15.500 17.500h6" stroke="#7a7a7a" />
          </Svg>
        </button>
        <button aria-label="Large icons view" className="ml-3">
          <PictureIcon />
        </button>
      </footer>
    </section>
  );
};

const App = () => (
  <div className="relative min-h-screen overflow-hidden font-['Open_Sans','Noto_Sans',sans-serif]">
    <Gradients />
    <DeviceManager />
    <Explorer />
  </div>
);

export default App;
